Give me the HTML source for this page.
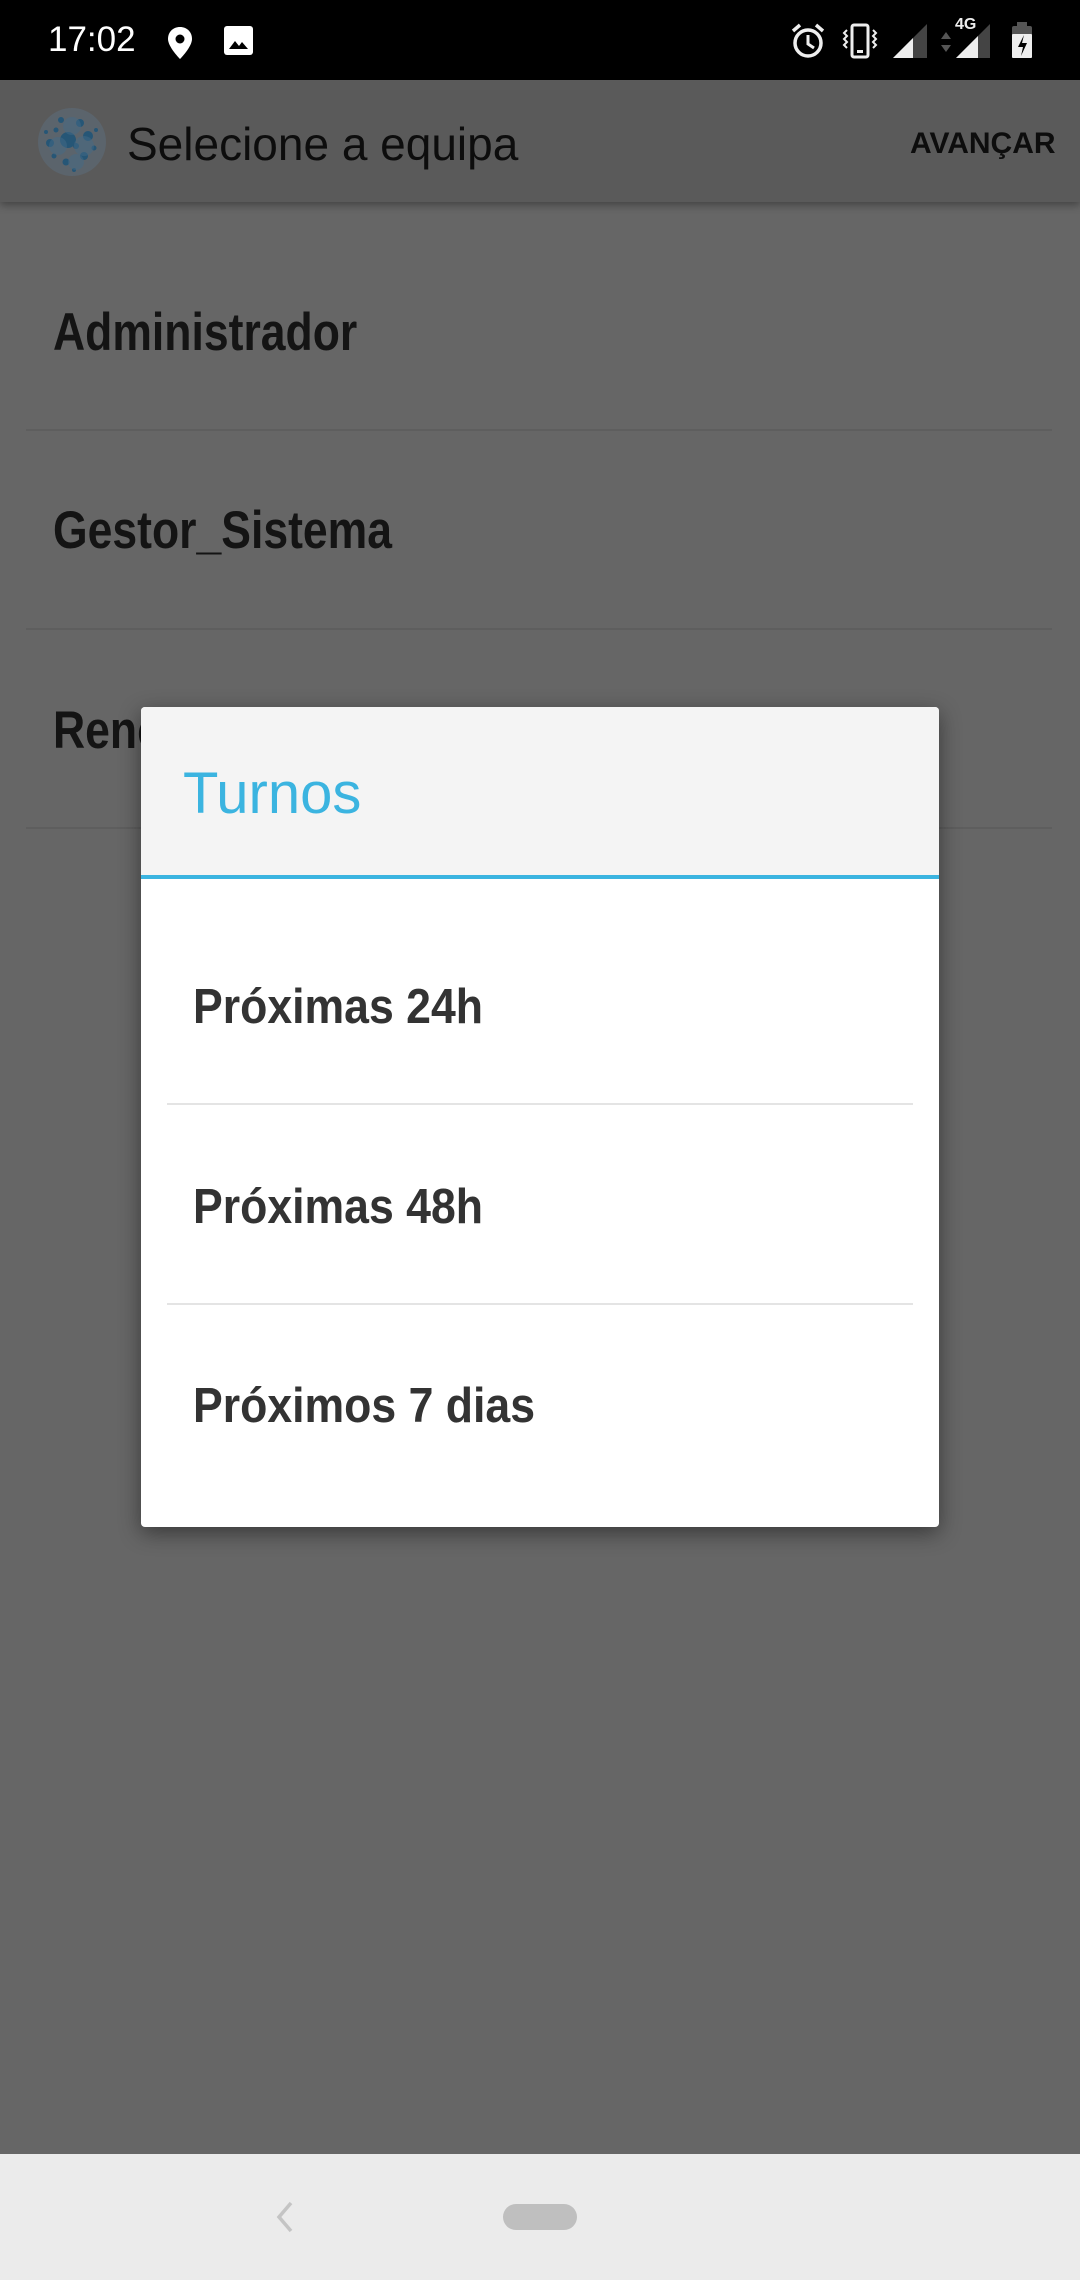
<!DOCTYPE html>
<html><head><meta charset="utf-8"><style>
*{margin:0;padding:0;box-sizing:border-box}
body{width:1080px;height:2280px;background:#666;position:relative;overflow:hidden;font-family:"Liberation Sans",sans-serif}
.abs{position:absolute;white-space:nowrap}
.sb{left:0;top:0;width:1080px;height:80px;background:#000}
.tb{left:0;top:80px;width:1080px;height:122px;background:#5a5a5a;box-shadow:0 3px 8px rgba(0,0,0,.35)}
.item{font-weight:bold;font-size:53px;color:#141414;transform:scaleX(.84);transform-origin:left bottom;line-height:1}
.div{height:2px;background:#5e5e5e;left:26px;width:1026px}
.dlg{left:141px;top:707px;width:798px;height:820px;background:#fff;border-radius:4px;box-shadow:0 6px 22px rgba(0,0,0,.45);overflow:hidden}
.dh{position:absolute;left:0;top:0;width:798px;height:172px;background:#f4f4f4;border-bottom:4px solid #3bb4e0}
.di{font-weight:bold;font-size:49px;color:#333;transform:scaleX(.91);transform-origin:left bottom;line-height:1}
.dd{height:2px;background:#e4e4e4;left:26px;width:746px}
.nav{left:0;top:2154px;width:1080px;height:126px;background:#ebebeb}
</style></head><body>
<div class="abs sb"></div>
<div class="abs" style="left:48px;top:20px;font-size:35px;color:#fff;line-height:40px">17:02</div>
<svg class="abs" style="left:166px;top:26px" width="28" height="34" viewBox="0 0 28 34"><path d="M14 1C7 1 2 6 2 13c0 8 12 20 12 20s12-12 12-20C26 6 21 1 14 1z" fill="#fff"/><circle cx="14" cy="13" r="4.5" fill="#000"/></svg>
<svg class="abs" style="left:223px;top:25px" width="31" height="31" viewBox="0 0 31 31"><rect x="1" y="1" width="29" height="29" rx="3" fill="#fff"/><path d="M6 24l6-8 4 5 3-4 6 7z" fill="#000"/></svg>
<svg class="abs" style="left:790px;top:22px" width="36" height="38" viewBox="0 0 36 38"><circle cx="18" cy="21" r="13" fill="none" stroke="#eee" stroke-width="3.5"/><path d="M18 13v9l6 4" fill="none" stroke="#eee" stroke-width="3"/><path d="M3 9l7-6M33 9l-7-6" stroke="#eee" stroke-width="3.5"/></svg>
<svg class="abs" style="left:842px;top:22px" width="36" height="38" viewBox="0 0 36 38"><rect x="10" y="3" width="16" height="32" rx="2" fill="none" stroke="#eee" stroke-width="3"/><rect x="15" y="28" width="6" height="3" fill="#eee"/><path d="M5 8l-3 3 3 3-3 3 3 3-3 3 3 3M31 8l3 3-3 3 3 3-3 3 3 3-3 3" fill="none" stroke="#eee" stroke-width="2"/></svg>
<svg class="abs" style="left:893px;top:24px" width="36" height="34" viewBox="0 0 36 34"><path d="M0 34L34 0v34z" fill="#444"/><path d="M0 34L20 14v20z" fill="#eee"/></svg>
<svg class="abs" style="left:939px;top:30px" width="14" height="24" viewBox="0 0 14 24"><path d="M7 2l5 7H2zM7 22l5-7H2z" fill="#555"/></svg>
<div class="abs" style="left:955px;top:16px;font-size:16px;font-weight:bold;color:#eee">4G</div>
<svg class="abs" style="left:956px;top:24px" width="36" height="34" viewBox="0 0 36 34"><path d="M0 34L34 0v34z" fill="#444"/><path d="M0 34L22 12v22z" fill="#eee"/></svg>
<svg class="abs" style="left:1011px;top:22px" width="22" height="36" viewBox="0 0 22 36"><rect x="6" y="0" width="10" height="5" fill="#555"/><rect x="1" y="4" width="20" height="32" rx="2" fill="#555"/><rect x="1" y="12" width="20" height="24" rx="1" fill="#eee"/><path d="M13 13l-6 12h5l-2 9 6-13h-5z" fill="#000"/></svg>

<div class="abs tb"></div>
<svg class="abs" style="left:36px;top:106px" width="72" height="72" viewBox="0 0 72 72">
<circle cx="36" cy="36" r="34" fill="#5b6670" opacity=".8"/>
<g fill="#1d5478" opacity=".85"><circle cx="32" cy="34" r="8"/><circle cx="14" cy="37" r="4"/><circle cx="52" cy="30" r="5"/><circle cx="25" cy="14" r="3"/><circle cx="44" cy="17" r="4"/><circle cx="48" cy="50" r="4"/><circle cx="30" cy="56" r="3.5"/><circle cx="18" cy="50" r="2.5"/><circle cx="58" cy="42" r="2.5"/><circle cx="40" cy="40" r="3"/><circle cx="20" cy="24" r="2.5"/><circle cx="60" cy="24" r="2"/><circle cx="38" cy="64" r="2"/><circle cx="10" cy="26" r="2"/></g>
<g fill="#456a86" opacity=".5"><circle cx="22" cy="40" r="9"/><circle cx="48" cy="40" r="10"/><circle cx="36" cy="20" r="9"/><circle cx="40" cy="56" r="8"/></g>
</svg>
<div class="abs" style="left:127px;top:119px;font-size:46px;color:#0d0d0d;line-height:50px">Selecione a equipa</div>
<div class="abs" style="left:910px;top:127px;font-size:30px;font-weight:bold;color:#0d0d0d;line-height:34px">AVANÇAR</div>

<div class="abs item" style="left:53px;top:306px">Administrador</div>
<div class="abs div" style="top:429px"></div>
<div class="abs item" style="left:53px;top:504px">Gestor_Sistema</div>
<div class="abs div" style="top:628px"></div>
<div class="abs item" style="left:53px;top:704px">Renovação</div>
<div class="abs div" style="top:827px"></div>

<div class="abs dlg">
<div class="dh"></div>
<div class="abs" style="left:42px;top:57px;font-size:58px;color:#3bb4e0;line-height:60px">Turnos</div>
<div class="abs di" style="left:52px;top:276px">Próximas 24h</div>
<div class="abs dd" style="top:396px"></div>
<div class="abs di" style="left:52px;top:476px">Próximas 48h</div>
<div class="abs dd" style="top:596px"></div>
<div class="abs di" style="left:52px;top:675px">Próximos 7 dias</div>
</div>

<div class="abs nav"></div>
<svg class="abs" style="left:272px;top:2200px" width="24" height="34" viewBox="0 0 24 34"><path d="M19 3L7 17l12 14" fill="none" stroke="#c4c4c4" stroke-width="3.5"/></svg>
<div class="abs" style="left:503px;top:2204px;width:74px;height:26px;border-radius:13px;background:#bfbfbf"></div>
</body></html>
